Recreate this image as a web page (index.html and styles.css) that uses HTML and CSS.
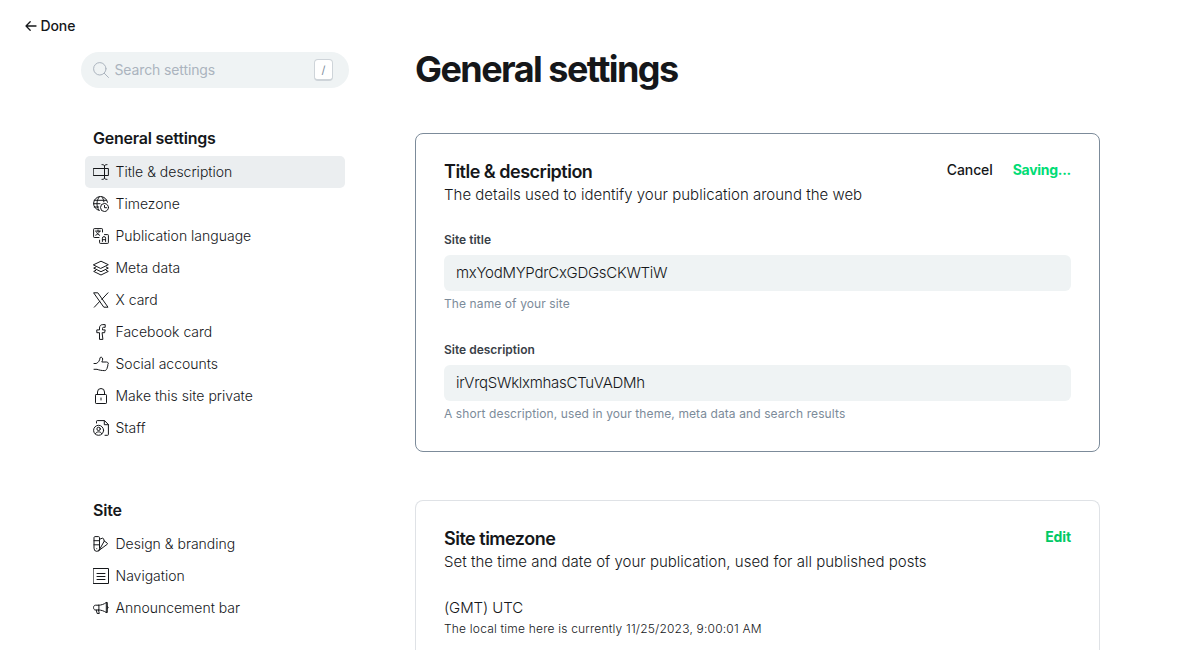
FILE: index.html
```html
<!DOCTYPE html>
<html lang="en">
<head>
<meta charset="utf-8">
<title>General settings</title>
<link rel="stylesheet" href="styles.css">
</head>
<body>
<header class="topbar">
  <a class="done"><svg class="done-arrow" viewBox="0 0 12 12"><path d="M11 6H1M5.200 1.800 1 6l4.200 4.200"/></svg><span>Done</span></a>
</header>
<div class="layout">
  <aside class="sidebar">
    <div class="search">
      <svg class="search-icon" viewBox="0 0 16 16"><circle cx="6.8" cy="6.8" r="6.2"/><path d="m11.3 11.3 4.2 4.2"/></svg>
      <span class="search-text">Search settings</span>
      <kbd class="key">/</kbd>
    </div>
    <nav class="group">
      <h2 class="group-title">General settings</h2>
      <ul class="items">
        <li class="item active"><svg class="icon" viewBox="0 0 16 16"><path d="M.6 4.500h14.800v7H.6zM11.500 2v12M9 .6c1.5 0 2.500.5 2.500 1.700 0-1.200 1-1.700 2.500-1.700M9 15.400c1.500 0 2.500-.5 2.500-1.700 0 1.200 1 1.700 2.500 1.700"/></svg><span>Title &amp; description</span></li>
        <li class="item"><svg class="icon" viewBox="0 0 16 16"><circle cx="11.5" cy="11.5" r="4"/><path d="M11.5 9.5v2.2h2M6.2 14.4A7 7 0 1 1 14.5 6.3M6 14.2C4.4 12 4 9.600 4 7.500S4.800 2.600 6.300.700M8.800.7c1.100 1.400 1.900 3.200 2.100 5.200M1.300 4.300h12.300M.6 7.700H7M1.200 11H5.700"/></svg><span>Timezone</span></li>
        <li class="item"><svg class="icon" viewBox="0 0 16 16"><path d="M6 9.500H1.300a.7.7 0 0 1-.7-.7V1.300a.7.7 0 0 1 .7-.7h7.500a.7.7 0 0 1 .7.7V4M2.500 3.100h5M5 2v1.100M6.500 3.200C6 5 4.500 6.500 2.700 7.200M3.700 4.500c.7 1.300 1.600 2.200 3 2.800M11.500 6.600h3.200a.7.700 0 0 1 .7.700v7.400a.7.7 0 0 1-.7.700H7.300a.7.7 0 0 1-.7-.7v-2.500M9.400 13.500V10.200a1.600 1.600 0 0 1 3.200 0v3.300M9.400 11.700h3.200"/></svg><span>Publication language</span></li>
        <li class="item"><svg class="icon" viewBox="0 0 16 16"><path d="M.7 4.700 8 1.200l7.300 3.500L8 8.300zM2.700 7.100.7 8.100 8 11.700l7.300-3.600-2-1M2.700 10.400l-2 1L8 15l7.300-3.600-2-1"/></svg><span>Meta data</span></li>
        <li class="item"><svg class="icon" viewBox="0 0 16 16"><path d="M1 .8h3.800L15 15.200h-3.800zM15 .8 8.800 7.400M6.900 9.200 1.300 15.200"/></svg><span>X card</span></li>
        <li class="item"><svg class="icon" viewBox="0 0 16 16"><path d="M9.500 8.700h2.100l.6-2.800H9.500V4.500c0-.8.300-1.200 1.100-1.200h1.600V.6H9.800C7.600.6 6.500 2 6.500 4v1.900H3.800v2.800h2.700v6.700h3z"/></svg><span>Facebook card</span></li>
        <li class="item"><svg class="icon" viewBox="0 0 16 16"><path d="M1 7.500h2.200C5.500 6.500 6.700 4.500 7 2c.2-1.300 2.600-1 2.700 1 0 1.100-.4 2.100-.9 3h4.700c2 0 2.300 2 1.300 2.600.3 1.200 0 1.900-.5 2.400.2 1-.2 1.700-.8 2.100-.1 1-.8 1.500-1.800 1.500-3.400 0-5.300-.5-7.700-1.300H1"/></svg><span>Social accounts</span></li>
        <li class="item"><svg class="icon" viewBox="0 0 16 16"><rect x="2.500" y="6.500" width="11" height="9" rx=".7"/><path d="M4.500 6.500V4a3.500 3.500 0 0 1 7 0v2.500M8 10v2"/></svg><span>Make this site private</span></li>
        <li class="item"><svg class="icon" viewBox="0 0 16 16"><circle cx="5.600" cy="10.300" r="5"/><circle cx="5.600" cy="8.900" r="1.700"/><path d="M2.400 13.800c.6-2.700 5.800-2.700 6.400 0M3.500 3V1.300c0-.4.300-.7.700-.7h7.300l3.900 3.900v10c0 .5-.3.800-.8.800H12M11.300.8v3.900h4"/></svg><span>Staff</span></li>
      </ul>
    </nav>
    <nav class="group">
      <h2 class="group-title">Site</h2>
      <ul class="items">
        <li class="item"><svg class="icon" viewBox="0 0 16 16"><path d="M1 1.600C1 1 1.400.6 2 .6h3.500c.6 0 1 .4 1 1v11a2.700 2.700 0 0 1-5.500 0zM1 4.700h5.500M1 8.800h5.500M6.500 3.300 9.300 2.200c.5-.2 1 0 1.200.5l.8 2.300-5 9M11.200 5l2.900 2c.4.300.5.800.2 1.200L5.500 14.800M3.700 12.700h.1"/></svg><span>Design &amp; branding</span></li>
        <li class="item"><svg class="icon" viewBox="0 0 16 16"><path d="M.5.5h15v15H.5zM4 5.500h8M4 8.500h8M4 11.500h8"/></svg><span>Navigation</span></li>
        <li class="item"><svg class="icon" viewBox="0 0 16 16"><path d="M5.500 5.200H2.400C-.1 5.200-.1 10 2.400 10h3.100zM5.500 5.200c3 0 5.500-1 7.800-2.700v10C11 11 8.500 10 5.500 10M13.300 2.500h1v10h-1M14.300 6.500c1.300 0 1.300 2 0 2M3.200 10l1 3.500h2.100L5.500 10"/></svg><span>Announcement bar</span></li>
      </ul>
    </nav>
  </aside>
  <main class="content">
    <h1 class="page-title">General settings</h1>
    <section class="card editing">
      <div class="card-head">
        <div><h3 class="card-title">Title &amp; description</h3><p class="card-desc">The details used to identify your publication around the web</p></div>
        <div class="actions"><span class="cancel">Cancel</span><span class="save">Saving...</span></div>
      </div>
      <div class="field"><label class="label">Site title</label><div class="input">mxYodMYPdrCxGDGsCKWTiW</div><p class="hint">The name of your site</p></div>
      <div class="field"><label class="label">Site description</label><div class="input">irVrqSWklxmhasCTuVADMh</div><p class="hint">A short description, used in your theme, meta data and search results</p></div>
    </section>
    <section class="card partial">
      <div class="card-head">
        <div><h3 class="card-title">Site timezone</h3><p class="card-desc">Set the time and date of your publication, used for all published posts</p></div>
        <div class="actions"><span class="save edit">Edit</span></div>
      </div>
      <div class="zone"><p class="zone-name">(GMT) UTC</p><p class="zone-time">The local time here is currently 11/25/2023, 9:00:01 AM</p></div>
    </section>
  </main>
</div>
</body>
</html>
```
FILE: styles.css
```css
* { box-sizing: border-box; }
body { margin: 0; height: 650px; overflow: hidden; background: #fff; color: #15171a; font-family: Inter, "Liberation Sans", sans-serif; font-size: 14px; font-weight: 300; }
h1, h2, h3, p, ul { margin: 0; padding: 0; }
ul { list-style: none; }
svg { fill: none; stroke: currentColor; stroke-linecap: round; stroke-linejoin: round; flex: none; }
span, h1, h2, h3, p { white-space: nowrap; }
.topbar { height: 52px; padding-left: 25px; display: flex; align-items: center; }
.done { display: flex; align-items: center; gap: 3.500px; font-weight: 500; letter-spacing: -.1px; }
.done span, .item span, .search-text { padding-bottom: 2px; }
.done-arrow { width: 12px; height: 12px; stroke-width: 1.3; }
.layout { display: flex; gap: 66px; padding-left: 81px; }
.sidebar { width: 268px; flex: none; }
.search { display: flex; align-items: center; height: 36px; padding: 0 16px 0 12px; border-radius: 18px; background: #eff3f4; color: #abb4be; font-weight: 400; letter-spacing: -.12px; }
.search-icon { width: 16px; height: 16px; margin-right: 5.500px; }
.search-text { flex: 1; }
.key { display: flex; align-items: center; justify-content: center; width: 19px; height: 22px; border: 1px solid #ced4d9; border-bottom-width: 2px; border-radius: 4px; background: #fff; color: #7c8b9a; font: 400 11px Inter, sans-serif; }
.group { padding: 40px 4px 0; }
.group + .group { padding-top: 56px; }
.group-title { height: 28px; padding: 0 8px; font-size: 16px; line-height: 20px; font-weight: 600; letter-spacing: -.22px; }
.item { display: flex; align-items: center; gap: 6.500px; height: 32px; padding-left: 8px; border-radius: 5px; font-size: 14px; color: #15171a; }
.item.active { background: #ebeef0; }
.icon { width: 16px; height: 16px; }
.content { width: 685px; flex: none; }
.page-title { height: 81px; font-size: 36px; line-height: 35px; font-weight: 700; letter-spacing: -1.55px; }
.card { height: 319px; padding: 28px; border: 1px solid #dfe2e6; border-radius: 8px; }
.card.editing { border-color: #7c8b9a; }
.card + .card { margin-top: 48px; }
.card.partial { height: 150px; padding-bottom: 0; border-bottom: 0; border-radius: 8px 8px 0 0; }
.card-head { display: flex; justify-content: space-between; height: 44px; }
.card-title { font-size: 18px; line-height: 20px; font-weight: 600; letter-spacing: -.5px; }
.card-desc { margin-top: 1px; font-size: 15px; line-height: 24px; letter-spacing: .01px; }
.actions { display: flex; gap: 20px; height: 17px; line-height: 15px; font-weight: 500; letter-spacing: -.1px; }
.save { color: #00dc75; font-weight: 700; letter-spacing: -.28px; }
.edit { color: #00c965; letter-spacing: -.1px; }
.field { margin-top: 24px; }
.label { display: block; height: 25px; font-size: 12px; line-height: 20px; font-weight: 600; color: #394047; }
.input { height: 36px; padding: 0 12px; border-radius: 6px; background: #eff3f4; font-size: 15px; line-height: 36px; letter-spacing: -.28px; }
.hint { margin-top: 4px; font-size: 12px; line-height: 18px; font-weight: 400; color: #7c8b9a; letter-spacing: .1px; }
.field + .field { margin-top: 27px; }
.zone { margin-top: 24px; }
.zone-name { font-size: 15px; line-height: 22px; letter-spacing: -.1px; }
.zone-time { font-size: 12px; line-height: 20px; letter-spacing: .2px; }
```
